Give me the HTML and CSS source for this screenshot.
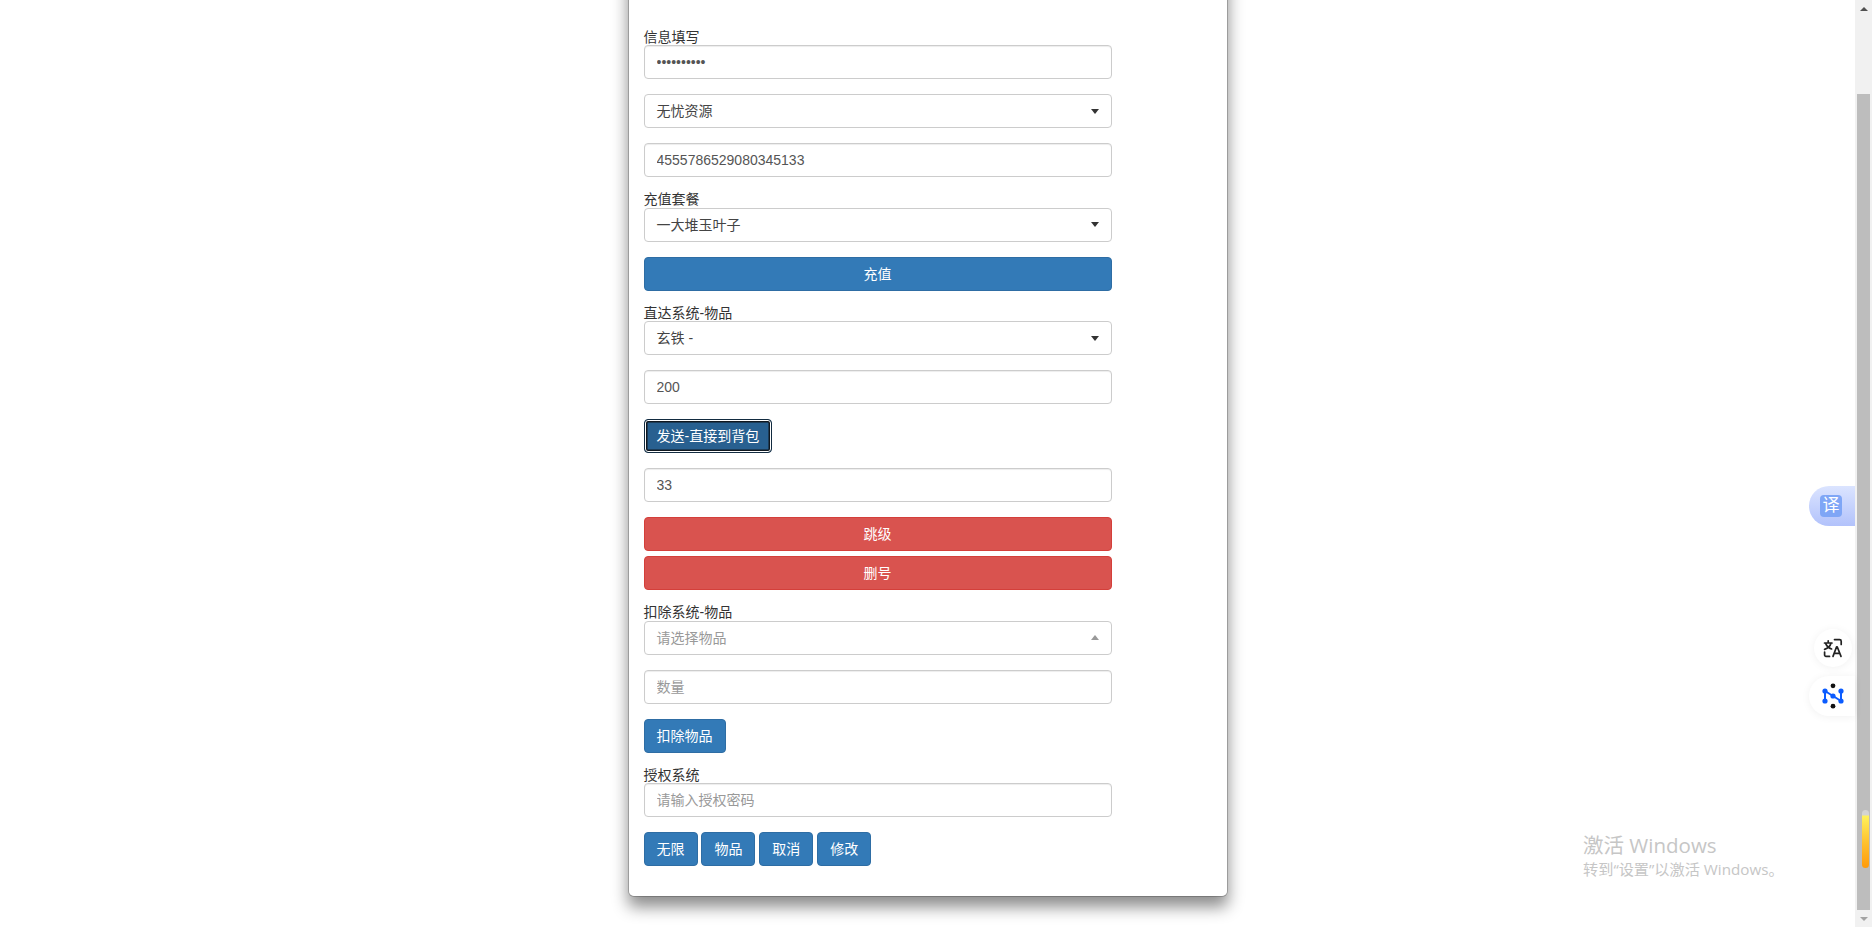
FILE: index.html
```html
<!DOCTYPE html>
<html lang="zh-CN">
<head>
<meta charset="utf-8">
<title>信息填写</title>
<link rel="stylesheet" href="styles.css">
</head>
<body>
<div class="app">
  <main class="viewport">
    <section class="modal">
      <form class="form">
        <div class="group">
          <label class="label">信息填写</label>
          <input class="control" type="password" value="1234567890">
        </div>
        <div class="group">
          <div class="control select"><span>无忧资源</span><i class="caret"></i></div>
        </div>
        <div class="group">
          <input class="control" type="text" value="4555786529080345133">
        </div>
        <div class="group">
          <label class="label">充值套餐</label>
          <div class="control select"><span>一大堆玉叶子</span><i class="caret"></i></div>
        </div>
        <div class="group">
          <button class="btn primary block" type="button">充值</button>
        </div>
        <div class="group">
          <label class="label">直达系统-物品</label>
          <div class="control select"><span>玄铁 -</span><i class="caret"></i></div>
        </div>
        <div class="group">
          <input class="control" type="text" value="200">
        </div>
        <div class="group">
          <button class="btn focused" type="button">发送-直接到背包</button>
        </div>
        <div class="group">
          <input class="control" type="text" value="33">
        </div>
        <div class="group stack">
          <button class="btn danger block" type="button">跳级</button>
          <button class="btn danger block" type="button">删号</button>
        </div>
        <div class="group">
          <label class="label">扣除系统-物品</label>
          <div class="control select placeholder"><span>请选择物品</span><i class="caret up"></i></div>
        </div>
        <div class="group">
          <input class="control" type="text" placeholder="数量">
        </div>
        <div class="group">
          <button class="btn primary" type="button">扣除物品</button>
        </div>
        <div class="group">
          <label class="label">授权系统</label>
          <input class="control" type="text" placeholder="请输入授权密码">
        </div>
        <div class="group row">
          <button class="btn primary" type="button">无限</button>
          <button class="btn primary" type="button">物品</button>
          <button class="btn primary" type="button">取消</button>
          <button class="btn primary" type="button">修改</button>
        </div>
      </form>
    </section>
  </main>
  <aside class="scrollbar">
    <div class="arrow-cell"><i class="tri tri-up"></i></div>
    <div class="track">
      <div class="thumb"></div>
    </div>
    <div class="arrow-cell"><i class="tri tri-down"></i></div>
    <div class="marker"></div>
  </aside>
  <div class="float translate-pill"><span class="yi">译</span></div>
  <div class="float circle">
    <svg width="20" height="20" viewBox="0 0 20 20" fill="none" stroke="#222" stroke-width="1.7" stroke-linecap="round" stroke-linejoin="round">
      <path d="M1.5 5H9M5.2 2.8V5M8 5C7.3 8 4.5 10.4 1.6 11.4M2.6 5.4C3.6 8 6 10.2 8.6 11"/>
      <path d="M11.5 1.6H16.6A1.6 1.6 0 0 1 18.2 3.2V6.5M1.6 14V17A1.4 1.4 0 0 0 3 18.4H6.5"/>
      <path d="M10 18.4L13.6 8.8H14.2L18 18.4M11.2 15.4H16.8"/>
    </svg>
  </div>
  <div class="float graph-pill">
    <svg width="22" height="26" viewBox="0 0 22 26">
      <circle cx="11" cy="2.8" r="2.4" fill="#111"/>
      <circle cx="11" cy="23.2" r="2.4" fill="#111"/>
      <path d="M3 8V18M3 8L19 18M19 8V18" stroke="#0b5cff" stroke-width="2" fill="none"/>
      <circle cx="3" cy="8" r="2.6" fill="#0b5cff"/>
      <circle cx="3" cy="18" r="2.6" fill="#0b5cff"/>
      <circle cx="19" cy="8" r="2.6" fill="#0b5cff"/>
      <circle cx="19" cy="18" r="2.6" fill="#0b5cff"/>
      <circle cx="11" cy="13" r="2.6" fill="#0b5cff"/>
    </svg>
  </div>
  <div class="watermark">
    <div class="wm-title">激活 Windows</div>
    <div class="wm-sub">转到“设置”以激活 Windows。</div>
  </div>
</div>
</body>
</html>
```
FILE: styles.css
```css
* { box-sizing: border-box; }
html, body { margin: 0; height: 100%; overflow: hidden; background: #fff; }
body {
  font-family: "Liberation Sans", "Noto Sans CJK SC", sans-serif;
  font-size: 14px;
  color: #333;
}
.app { display: flex; height: 100vh; position: relative; overflow: hidden; }
.viewport { flex: 1; min-width: 0; height: 100%; overflow: hidden; }

.modal {
  width: 600px;
  margin: -30px auto 0;
  padding: 58.5px 15px 30px;
  background: #fff;
  border: 1px solid rgba(0, 0, 0, .2);
  border-radius: 6px;
  box-shadow: 0 10px 16px rgba(0, 0, 0, .45);
  background-clip: padding-box;
}
.form { width: 468px; }
.group { margin-bottom: 15px; }
.group:last-child { margin-bottom: 0; }
.stack { display: flex; flex-direction: column; gap: 5px; }
.row { display: flex; gap: 3.9px; }
.label { display: block; height: 15.5px; line-height: 15.5px; }

.control {
  display: block;
  width: 100%;
  height: 34px;
  padding: 6px 12px;
  font: inherit;
  color: #555;
  background: #fff;
  border: 1px solid #ccc;
  border-radius: 4px;
  box-shadow: inset 0 1px 1px rgba(0, 0, 0, .075);
  outline: none;
}
.control::placeholder { color: #999; opacity: 1; }
.select {
  display: flex;
  align-items: center;
  justify-content: space-between;
  padding: 4px 12px 6px;
  color: #444;
  box-shadow: none;
}
.placeholder { color: #999; }
.caret {
  width: 0;
  height: 0;
  margin-top: 2px;
  border-left: 4px solid transparent;
  border-right: 4px solid transparent;
  border-top: 5px solid #333;
}
.caret.up { border-top: 0; border-bottom: 5px solid #999; }

.btn {
  height: 34px;
  padding: 4px 12px 6px;
  font: inherit;
  color: #fff;
  border: 1px solid transparent;
  border-radius: 4px;
  text-align: center;
  white-space: nowrap;
}
.block { display: block; width: 100%; }
.primary { background: #337ab7; border-color: #2e6da4; }
.danger { background: #d9534f; border-color: #d43f3a; }
.focused {
  background: #286090;
  border-color: #122b40;
  box-shadow: inset 0 0 0 1px #fff, inset 0 0 0 2.5px #101820;
}

.scrollbar {
  flex: none;
  width: 17px;
  height: 100%;
  display: flex;
  flex-direction: column;
  background: #f1f1f1;
  position: relative;
}
.arrow-cell { flex: none; height: 17px; display: flex; align-items: center; justify-content: center; }
.tri { width: 0; height: 0; border-left: 4px solid transparent; border-right: 4px solid transparent; }
.tri-up { border-bottom: 4px solid #505050; }
.tri-down { border-top: 4px solid #a3a3a3; }
.track { flex: 1; padding: 77px 2px 0; }
.thumb { height: 100%; background: #bdbdbd; }
.marker {
  position: absolute;
  left: 7px;
  top: 810px;
  width: 7px;
  height: 58px;
  border-radius: 4px;
  background: linear-gradient(#d4d4d4 0, #d4d4d4 5px, #fff25c 6px, #ffc22e 55%, #ff9a0a 100%);
}

.float { position: absolute; display: flex; align-items: center; justify-content: center; background: #fff; }
.translate-pill {
  left: 1809px;
  top: 486px;
  width: 46px;
  height: 40px;
  padding-right: 2px;
  border-radius: 20px 0 0 20px;
  background: linear-gradient(#dbe4ff, #b2c2fb);
}
.yi {
  width: 22px;
  height: 22px;
  border-radius: 4px;
  background: #7fa6f6;
  color: #fff;
  font-size: 17px;
  line-height: 22px;
  text-align: center;
}
.circle {
  left: 1814px;
  top: 629px;
  width: 38px;
  height: 38px;
  border-radius: 50%;
  box-shadow: 0 1px 8px rgba(0, 0, 0, .06);
}
.graph-pill {
  left: 1809px;
  top: 676px;
  width: 46px;
  height: 40px;
  padding-left: 2px;
  border-radius: 20px 0 0 20px;
  box-shadow: 0 1px 8px rgba(0, 0, 0, .06);
}
.watermark {
  position: absolute;
  left: 1583px;
  top: 832px;
  color: #c6c6c6;
  font-family: "Open Sans", "Noto Sans CJK SC", sans-serif;
  white-space: nowrap;
}
.wm-title { font-size: 20.5px; line-height: 26px; }
.wm-sub { font-size: 15.2px; line-height: 22px; }
```
